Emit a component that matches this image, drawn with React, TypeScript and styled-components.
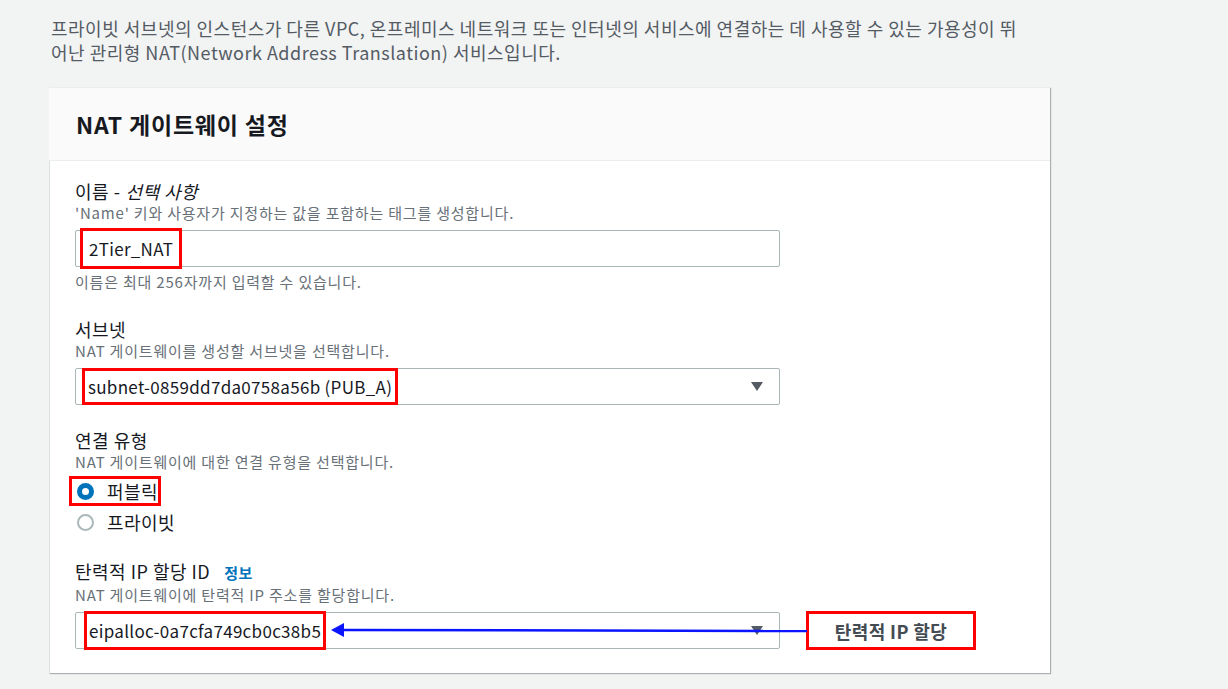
import React from "react";
import styled, { createGlobalStyle } from "styled-components";

const GlobalStyle = createGlobalStyle`
  html, body {
    margin: 0;
    padding: 0;
    background: #f2f3f3;
  }
  body {
    font-family: "Noto Sans CJK KR", "Noto Sans", sans-serif;
    color: #16191f;
  }
`;

const Page = styled.div`
  box-sizing: border-box;
  width: 1228px;
  height: 689px;
  padding: 16px 0 0 49px;
  overflow: hidden;
`;

const Intro = styled.p`
  margin: 0 0 23px 2px;
  font-size: 18px;
  letter-spacing: 0.5px;
  line-height: 24px;
  color: #545b64;

  & > span {
    display: block;
    white-space: nowrap;
  }
`;

const Panel = styled.section`
  width: 1001px;
  background: #fff;
  border-top: 1px solid #eaeded;
  box-shadow: 1px 1px 1px 0 rgba(0, 28, 36, 0.3), 1px 1px 1px 0 rgba(0, 28, 36, 0.15) inset;
`;

const PanelHeader = styled.header`
  box-sizing: border-box;
  height: 73px;
  padding-left: 27px;
  display: flex;
  align-items: center;
  background: #fafafa;
  border-bottom: 1px solid #eaeded;
`;

const Title = styled.h2`
  margin: 0;
  font-size: 23px;
  letter-spacing: 0.8px;
  font-weight: 700;
  color: #16191f;
`;

const PanelBody = styled.div`
  padding: 18px 26px 24px 26px;
  display: flex;
  flex-direction: column;
`;

const Field = styled.div<{ $gap?: number }>`
  display: flex;
  flex-direction: column;
  margin-top: ${(p) => p.$gap ?? 0}px;
`;

const Label = styled.div`
  font-size: 18px;
  letter-spacing: 0.5px;
  line-height: 24px;
  color: #16191f;
  display: flex;
  align-items: baseline;
  white-space: nowrap;

  em {
    font-style: italic;
    margin-left: 5px;
  }
`;

const InfoLink = styled.a`
  margin-left: 14px;
  font-size: 15px;
  font-weight: 700;
  color: #0073bb;
  text-decoration: none;
`;

const Description = styled.div`
  font-size: 15px;
  letter-spacing: 0.8px;
  line-height: 20px;
  color: #687078;
  white-space: nowrap;
`;

const Hint = styled(Description)`
  margin-top: 5px;
`;

const Control = styled.div<{ $pad: number }>`
  box-sizing: border-box;
  width: 705px;
  height: 37px;
  margin-top: 7px;
  padding-left: ${(p) => p.$pad}px;
  padding-right: 16px;
  display: flex;
  align-items: center;
  border: 1px solid #aab7b8;
  border-radius: 2px;
  background: #fff;
  font-size: 17px;
  letter-spacing: 0.3px;
  color: #16191f;
`;

const Highlight = styled.span<{ $inner: number; $grow?: number }>`
  box-sizing: border-box;
  display: inline-flex;
  align-items: center;
  height: ${(p) => 37 + (p.$grow ?? 0)}px;
  padding: 0 ${(p) => p.$inner}px;
  border: 3px solid #f00;
  white-space: nowrap;
`;

const Caret = styled.span`
  margin-left: auto;
  width: 0;
  height: 0;
  border-left: 6px solid transparent;
  border-right: 6px solid transparent;
  border-top: 9px solid #545b64;
`;

const RadioGroup = styled.div`
  margin-top: 4px;
  display: flex;
  flex-direction: column;
  gap: 1px;
`;

const RadioRow = styled.label<{ $marked?: boolean }>`
  box-sizing: border-box;
  width: ${(p) => (p.$marked ? "92px" : "auto")};
  height: 30px;
  margin-left: -6px;
  padding-left: 5px;
  display: flex;
  align-items: center;
  gap: 13px;
  border: 3px solid ${(p) => (p.$marked ? "#f00" : "transparent")};
  font-size: 18px;
  letter-spacing: 0.4px;
  color: #16191f;
  white-space: nowrap;
`;

const RadioDot = styled.span<{ $checked?: boolean }>`
  box-sizing: border-box;
  flex: none;
  width: 17px;
  height: 17px;
  border-radius: 50%;
  background: #fff;
  border: ${(p) => (p.$checked ? "5px solid #0073bb" : "2px solid #aab7b8")};
`;

const EipRow = styled.div`
  position: relative;
  display: flex;
  align-items: flex-end;
`;

const Callout = styled.div`
  box-sizing: border-box;
  width: 170px;
  height: 39px;
  margin-left: 26px;
  margin-bottom: -1px;
  display: flex;
  align-items: center;
  justify-content: center;
  border: 3px solid #f00;
  font-size: 18px;
  letter-spacing: 0.4px;
  font-weight: 700;
  color: #444b53;
`;

const ArrowOverlay = styled.svg`
  position: absolute;
  left: 252px;
  top: 12px;
  pointer-events: none;
`;

export default function App(): JSX.Element {
  return (
    <>
      <GlobalStyle />
      <Page>
        <Intro>
          <span>
            프라이빗 서브넷의 인스턴스가 다른 VPC, 온프레미스 네트워크 또는 인터넷의 서비스에 연결하는 데 사용할 수 있는 가용성이 뛰
          </span>
          <span>어난 관리형 NAT(Network Address Translation) 서비스입니다.</span>
        </Intro>
        <Panel>
          <PanelHeader>
            <Title>NAT 게이트웨이 설정</Title>
          </PanelHeader>
          <PanelBody>
            <Field>
              <Label>
                이름 -<em>선택 사항</em>
              </Label>
              <Description>'Name' 키와 사용자가 지정하는 값을 포함하는 태그를 생성합니다.</Description>
              <Control $pad={4}>
                <Highlight $inner={6} $grow={4}>2Tier_NAT</Highlight>
              </Control>
              <Hint>이름은 최대 256자까지 입력할 수 있습니다.</Hint>
            </Field>

            <Field $gap={25}>
              <Label>서브넷</Label>
              <Description>NAT 게이트웨이를 생성할 서브넷을 선택합니다.</Description>
              <Control $pad={6}>
                <Highlight $inner={3}>subnet-0859dd7da0758a56b (PUB_A)</Highlight>
                <Caret />
              </Control>
            </Field>

            <Field $gap={23}>
              <Label>연결 유형</Label>
              <Description>NAT 게이트웨이에 대한 연결 유형을 선택합니다.</Description>
              <RadioGroup>
                <RadioRow $marked>
                  <RadioDot $checked />
                  퍼블릭
                </RadioRow>
                <RadioRow>
                  <RadioDot />
                  프라이빗
                </RadioRow>
              </RadioGroup>
            </Field>

            <Field $gap={22}>
              <Label>
                탄력적 IP 할당 ID<InfoLink>정보</InfoLink>
              </Label>
              <Description>NAT 게이트웨이에 탄력적 IP 주소를 할당합니다.</Description>
              <EipRow>
                <Control $pad={8}>
                  <Highlight $inner={2} $grow={2}>eipalloc-0a7cfa749cb0c38b5</Highlight>
                  <Caret />
                </Control>
                <Callout>탄력적 IP 할당</Callout>
                <ArrowOverlay width="480" height="30" viewBox="0 0 480 30">
                  <line x1="14" y1="13" x2="480" y2="14" stroke="#0a14ff" strokeWidth="2.5" />
                  <polygon points="4,13 17,6 17,20" fill="#0a14ff" />
                </ArrowOverlay>
              </EipRow>
            </Field>
          </PanelBody>
        </Panel>
      </Page>
    </>
  );
}
